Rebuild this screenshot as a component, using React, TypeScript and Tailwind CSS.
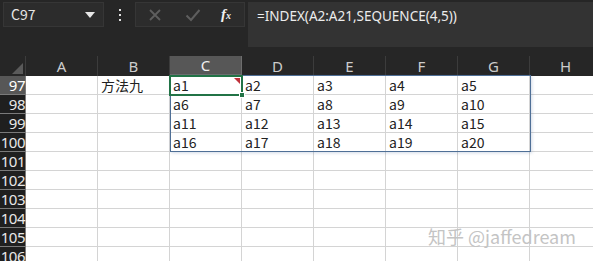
import React from "react";

const COLS = ["A", "B", "C", "D", "E", "F", "G", "H"];
const ROWS = [97, 98, 99, 100, 101, 102, 103, 104, 105, 106];

// value lookup for the spilled range C97:G100
function cellText(row: number, col: number): string {
  if (row === 97 && col === 1) return "方法九";
  if (row >= 97 && row <= 100 && col >= 2 && col <= 6) {
    return "a" + ((row - 97) * 5 + (col - 2) + 1);
  }
  return "";
}

const FONT = { fontFamily: '"Noto Sans CJK SC", "Liberation Sans", sans-serif' };

function TopBar() {
  return (
    <div className="flex h-[56px] items-start bg-[#262626] pt-[2px]">
      {/* Name box */}
      <div className="ml-[3px] flex h-[25px] w-[101px] items-center justify-between border border-[#363636] bg-[#2c2c2c] pl-[7px] pr-[8px] text-[14px] text-[#e6e6e6]">
        <span>C97</span>
        <svg width="10" height="6" viewBox="0 0 10 6">
          <path d="M0 0h10L5 6z" fill="#e6e6e6" />
        </svg>
      </div>

      {/* Dots */}
      <div className="flex h-[25px] w-[31px] flex-col items-center justify-center gap-[3px]">
        <span className="h-[2px] w-[2px] bg-[#e0e0e0]" />
        <span className="h-[2px] w-[2px] bg-[#e0e0e0]" />
        <span className="h-[2px] w-[2px] bg-[#e0e0e0]" />
      </div>

      {/* Cancel / enter / fx */}
      <div className="flex h-[25px] w-[110px] items-center border border-[#363636] bg-[#2c2c2c]">
        <svg width="14" height="14" viewBox="0 0 14 14" className="ml-[12px]">
          <path d="M2 2l10 10M12 2L2 12" stroke="#5e5e5e" strokeWidth="1.8" />
        </svg>
        <svg width="16" height="14" viewBox="0 0 16 14" className="ml-[23px]">
          <path d="M1.5 7.5l4.5 4.5L14.5 2" stroke="#5e5e5e" strokeWidth="2" fill="none" />
        </svg>
        <span
          className="ml-[20px] text-[15px] font-bold italic text-[#f0f0f0]"
          style={{ fontFamily: '"Liberation Serif", serif' }}
        >
          f<span className="text-[10px]">x</span>
        </span>
      </div>

      {/* Formula box */}
      <div
        className="ml-[3px] h-[45px] flex-1 bg-[#333333] pl-[9px] pt-[4px] text-[13.5px] text-[#ececec]"
        style={{ fontFamily: '"Noto Sans", sans-serif' }}
      >
        =INDEX(A2:A21,SEQUENCE(4,5))
      </div>
    </div>
  );
}

function Sheet() {
  return (
    <div className="relative">
      <div className="grid grid-cols-[26px_repeat(8,72px)] grid-rows-[20px_repeat(10,19px)]">
        {/* Corner */}
        <div className="relative border-r border-[#3c3c3c] bg-[#262626]">
          <svg width="11" height="11" viewBox="0 0 11 11" className="absolute bottom-[2px] right-[2px]">
            <path d="M11 0v11H0z" fill="#5a5a5a" />
          </svg>
        </div>
        {COLS.map((c) => (
          <div
            key={c}
            className={
              c === "C"
                ? "flex items-center justify-center border-r border-b-2 border-[#6e6e6e] bg-[#575757] text-[15px] text-[#f0f0f0]"
                : "flex items-center justify-center border-r border-[#3c3c3c] bg-[#262626] text-[15px] text-[#cccccc]"
            }
            style={{ fontFamily: '"Noto Sans", sans-serif' }}
          >
            {c}
          </div>
        ))}

        {ROWS.map((r) => (
          <React.Fragment key={r}>
            <div
              className={
                r === 97
                  ? "flex items-center justify-end border-b border-r border-[#7a7a7a] bg-[#575757] text-[15px] tracking-[-0.5px] text-white"
                  : "flex items-center justify-end border-b border-r border-[#7a7a7a] bg-[#1f1f1f] text-[15px] tracking-[-0.5px] text-[#e8e8e8]"
              }
              style={{ fontFamily: '"Noto Sans", sans-serif' }}
            >
              {r}
            </div>
            {COLS.map((c, ci) => (
              <div
                key={c}
                className="flex items-center whitespace-nowrap border-b border-r border-[#d4d4d4] bg-white pl-[3px] text-[14px] text-[#222]"
              >
                {cellText(r, ci)}
              </div>
            ))}
          </React.Fragment>
        ))}
      </div>

      {/* Spill range outline C97:G100 */}
      <div className="pointer-events-none absolute left-[170px] top-[19px] h-[77px] w-[361px] border border-[#4f6f96] shadow-[1px_1px_3px_rgba(80,110,160,0.25)]" />

      {/* Active cell C97 */}
      <div className="pointer-events-none absolute left-[169px] top-[19px] h-[21px] w-[74px] border-2 border-[#217346]">
        <svg width="6" height="6" viewBox="0 0 6 6" className="absolute right-[1px] top-[1px]">
          <path d="M0 0h6v6z" fill="#c0303a" />
        </svg>
        <div className="absolute -bottom-[4px] -right-[4px] h-[6px] w-[6px] border border-white bg-[#217346]" />
      </div>

      {/* Watermark */}
      <div
        className="pointer-events-none absolute left-[428px] top-[167px] text-[18px] text-[#c4c4c4]"
        style={{ fontFamily: '"Noto Sans CJK SC", "Liberation Sans", sans-serif' }}
      >
        知乎 @jaffedream
      </div>
    </div>
  );
}

export default function App() {
  return (
    <div className="h-[261px] w-[593px] overflow-hidden bg-[#262626]" style={FONT}>
      <TopBar />
      <Sheet />
    </div>
  );
}
